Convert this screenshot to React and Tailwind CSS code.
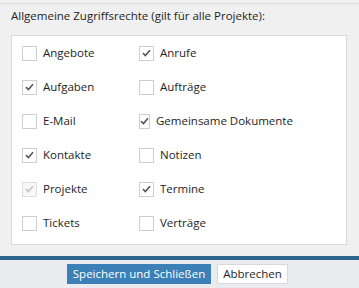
import React from "react";

const rights = [
  ["Angebote", false, "Anrufe", true],
  ["Aufgaben", true, "Aufträge", false],
  ["E-Mail", false, "Gemeinsame Dokumente", true],
  ["Kontakte", true, "Notizen", false],
  ["Projekte", "disabled", "Termine", true],
  ["Tickets", false, "Verträge", false],
];

const Box = ({ state }) => {
  const disabled = state === "disabled";
  return (
    <span
      className={`w-[15px] h-[15px] border flex items-center justify-center ${
        disabled ? "border-[#dedede] bg-[#f7f7f7]" : "border-[#cfcfcf] bg-white"
      }`}
    >
      {state && (
        <svg width="9" height="8" viewBox="0 0 9 8">
          <path
            d="M1 4.2 L3.4 6.5 L8 1.2"
            fill="none"
            stroke={disabled ? "#c4c4c4" : "#555"}
            strokeWidth="1.6"
          />
        </svg>
      )}
    </span>
  );
};

const Item = ({ label, state }) => (
  <label className="flex items-center h-[34px] gap-[6px] w-[117px] whitespace-nowrap">
    <Box state={state} />
    <span>{label}</span>
  </label>
);

export default function App() {
  return (
    <div
      className="w-[359px] h-[288px] bg-[#f0f0f0] text-[11.5px] text-[#1e1e1e] flex flex-col overflow-hidden"
      style={{ fontFamily: '"Open Sans", "Noto Sans", sans-serif' }}
    >
      <div className="h-[3px] border-b border-[#dcdcdc] box-content" />
      <div className="px-[11px] pt-[3px] h-[31px]">Allgemeine Zugriffsrechte (gilt für alle Projekte):</div>
      <div className="mx-[11px] w-[336px] h-[210px] bg-white border border-[#dadada] pl-[10px]">
        {rights.map(([a, sa, b, sb]) => (
          <div key={a} className="flex">
            <Item label={a} state={sa} />
            <Item label={b} state={sb} />
          </div>
        ))}
      </div>
      <div className="h-[11px]" />
      <div className="h-[4px] bg-[#2d6791]" />
      <div className="flex-1 bg-[#e9ebee] flex justify-center items-start pt-[4px] gap-[6px] pr-[4px]">
        <button className="h-[20px] w-[144px] bg-[#3b80b7] text-white whitespace-nowrap">Speichern und Schließen</button>
        <button className="h-[20px] w-[71px] bg-white border border-[#d9d9d9] text-[#1e1e1e]">Abbrechen</button>
      </div>
    </div>
  );
}
